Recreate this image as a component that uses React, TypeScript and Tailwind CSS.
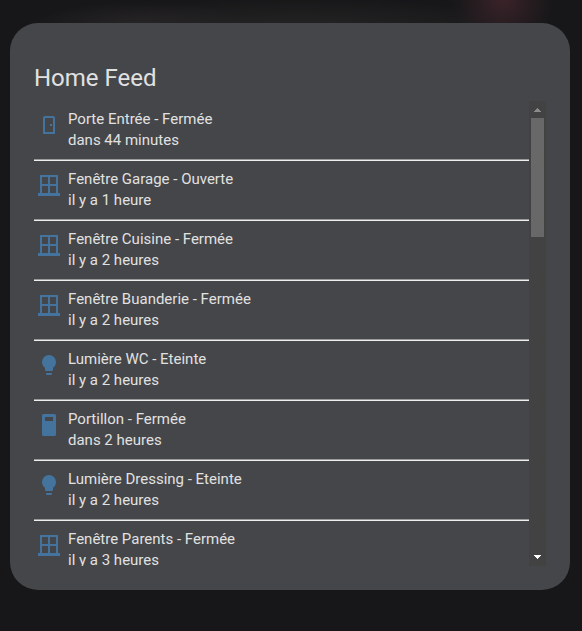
import { useRef } from "react";

type IconName = "door" | "window" | "bulb" | "gate";

interface FeedItem {
  id: number;
  icon: IconName;
  title: string;
  when: string;
}

const ICON_PATHS: Record<IconName, string> = {
  door: "M8,3C6.89,3 6,3.89 6,5V21H18V5C18,3.89 17.11,3 16,3H8M8,5H16V19H8V5M13,11H15V13H13V11Z",
  window:
    "M21 20V2H3V20H1V23H23V20M19 11H13V4H19M11 4V11H5V4M5 13H11V20H5M13 20V13H19V20Z",
  bulb: "M12,2A7,7 0 0,0 5,9C5,11.38 6.19,13.47 8,14.74V17A1,1 0 0,0 9,18H15A1,1 0 0,0 16,17V14.74C17.81,13.47 19,11.38 19,9A7,7 0 0,0 12,2M9,21A1,1 0 0,0 10,22H14A1,1 0 0,0 15,21V20H9V21Z",
  gate: "M6.5,1A1.5,1.5 0 0,0 5,2.5V21.5A1.5,1.5 0 0,0 6.5,23H17.5A1.5,1.5 0 0,0 19,21.5V2.5A1.5,1.5 0 0,0 17.5,1H6.5M8,4H16V8H8V4Z",
};

const FEED: FeedItem[] = [
  { id: 1, icon: "door", title: "Porte Entrée - Fermée", when: "dans 44 minutes" },
  { id: 2, icon: "window", title: "Fenêtre Garage - Ouverte", when: "il y a 1 heure" },
  { id: 3, icon: "window", title: "Fenêtre Cuisine - Fermée", when: "il y a 2 heures" },
  { id: 4, icon: "window", title: "Fenêtre Buanderie - Fermée", when: "il y a 2 heures" },
  { id: 5, icon: "bulb", title: "Lumière WC - Eteinte", when: "il y a 2 heures" },
  { id: 6, icon: "gate", title: "Portillon - Fermée", when: "dans 2 heures" },
  { id: 7, icon: "bulb", title: "Lumière Dressing - Eteinte", when: "il y a 2 heures" },
  { id: 8, icon: "window", title: "Fenêtre Parents - Fermée", when: "il y a 3 heures" },
];

function FeedIcon({ name }: { name: IconName }) {
  return (
    <svg viewBox="0 0 24 24" className="h-6 w-6 fill-[#44739e]" aria-hidden="true">
      <path fillRule="evenodd" d={ICON_PATHS[name]} />
    </svg>
  );
}

function FeedRow({ item }: { item: FeedItem }) {
  return (
    <li className="border-b border-[#eeeeee] last:border-b-0">
      <div className="flex gap-1 border-b border-[#9a9a9a] py-2">
        <div className="flex w-[30px] shrink-0 justify-center pt-1">
          <FeedIcon name={item.icon} />
        </div>
        <div className="min-w-0 text-[15px] leading-[21px]">
          <p>{item.title}</p>
          <p>{item.when}</p>
        </div>
      </div>
    </li>
  );
}

function Scrollbar({ onStep }: { onStep: (delta: number) => void }) {
  return (
    <div className="flex w-[17px] shrink-0 flex-col bg-[#424242]">
      <button
        aria-label="Défiler vers le haut"
        onClick={() => onStep(-60)}
        className="flex h-[17px] items-center justify-center"
      >
        <svg viewBox="0 0 7 4" className="h-1 w-[7px] fill-[#8b8b8b]" shapeRendering="crispEdges">
          <path d="M3 0h1v1h1v1h1v1h1v1H0V3h1V2h1V1h1z" />
        </svg>
      </button>
      <div className="flex-1 px-0.5">
        <div className="h-[119px] bg-[#686868]" />
      </div>
      <button
        aria-label="Défiler vers le bas"
        onClick={() => onStep(60)}
        className="flex h-[17px] items-center justify-center pb-0.5"
      >
        <svg viewBox="0 0 7 4" className="h-1 w-[7px] fill-white" shapeRendering="crispEdges">
          <path d="M0 0h7v1H6v1H5v1H4v1H3V3H2V2H1V1H0z" />
        </svg>
      </button>
    </div>
  );
}

export default function App() {
  const listRef = useRef<HTMLUListElement>(null);

  const step = (delta: number) => {
    listRef.current?.scrollBy({ top: delta });
  };

  return (
    <div className="min-h-screen bg-[#171719] bg-[radial-gradient(ellipse_50px_46px_at_503px_0px,#3a2329,transparent),radial-gradient(ellipse_110px_24px_at_140px_26px,#272425,transparent),radial-gradient(ellipse_240px_32px_at_300px_30px,#262525,transparent)] bg-no-repeat pt-[23px] pr-3 pb-10 pl-[10px] font-[Roboto,sans-serif] text-[#e1e1e1]">
      <section className="rounded-[28px] bg-[#454649] px-6 pb-6">
        <h1 className="pt-[39px] pb-[7px] text-2xl leading-8">Home Feed</h1>
        <div className="flex h-[465px]">
          <ul
            ref={listRef}
            className="min-w-0 flex-1 overflow-y-auto [scrollbar-width:none]"
          >
            {FEED.map((item) => (
              <FeedRow key={item.id} item={item} />
            ))}
          </ul>
          <Scrollbar onStep={step} />
        </div>
      </section>
    </div>
  );
}
